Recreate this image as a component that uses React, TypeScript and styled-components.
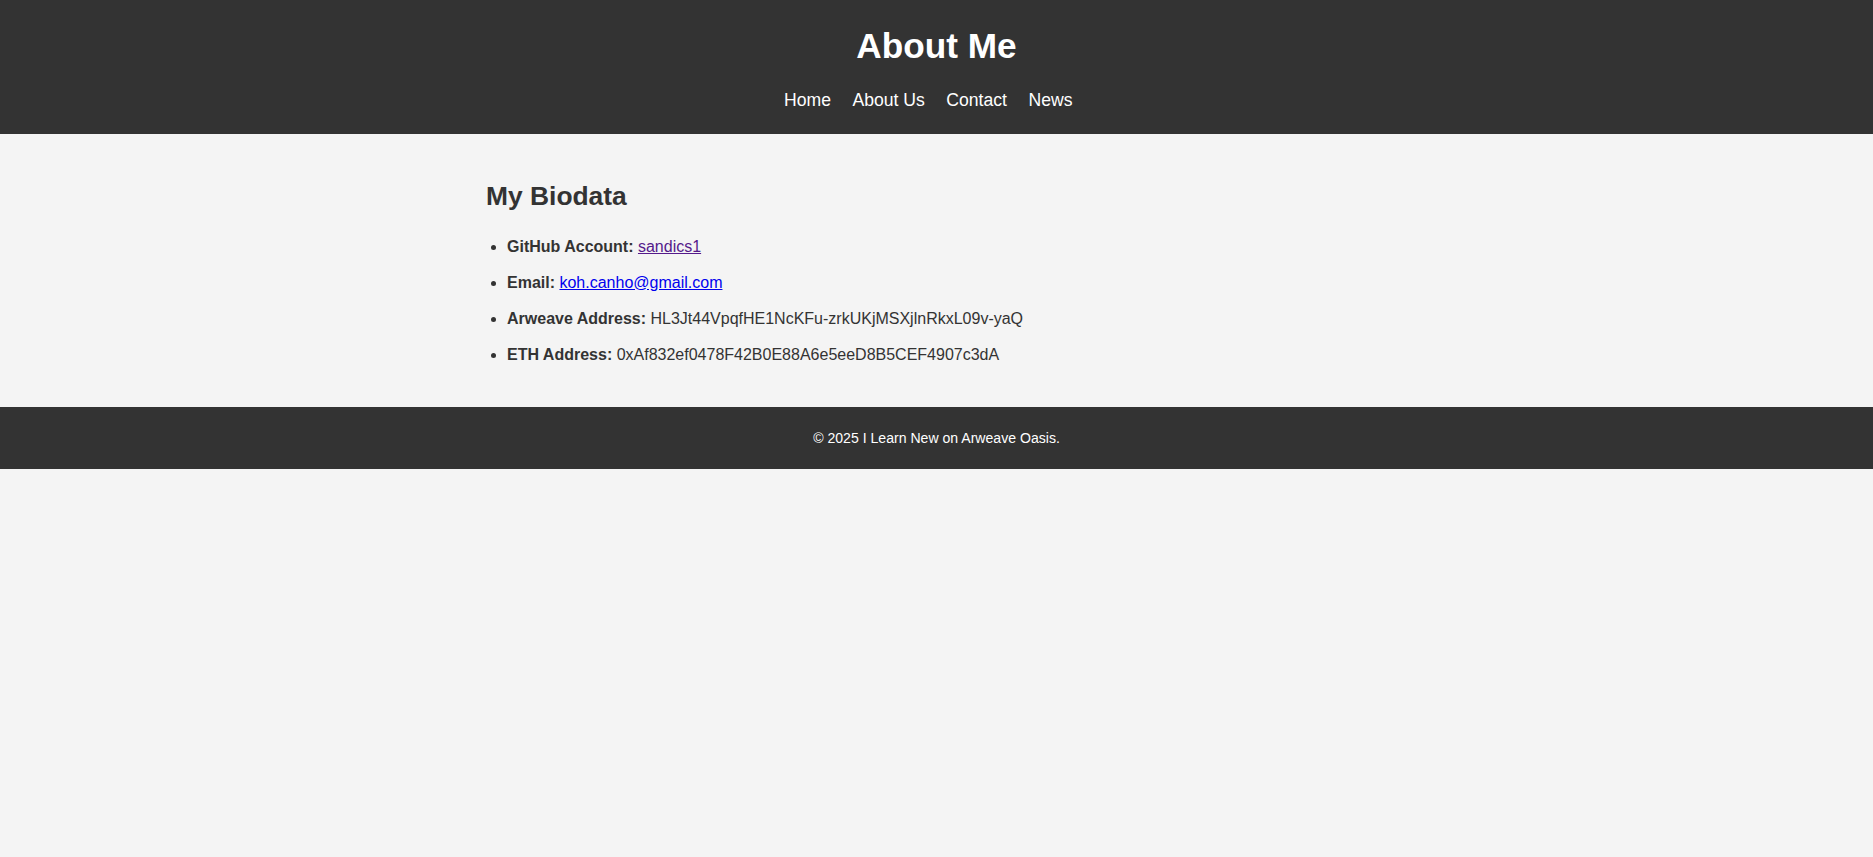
import React from "react";
import styled, { createGlobalStyle } from "styled-components";

const GlobalStyle = createGlobalStyle`
  html, body {
    margin: 0;
    padding: 0;
    background: #f4f4f4;
  }
  body {
    font-family: "Liberation Sans", Arial, sans-serif;
    color: #333;
    font-size: 17.6px;
  }
`;

const Header = styled.header`
  background: #333;
  color: #fff;
  padding: 26px 0 24px;
  text-align: center;
`;

const Title = styled.h1`
  margin: 0 0 24px;
  font-size: 35.2px;
  line-height: 40px;
  font-weight: bold;
`;

const Nav = styled.nav`
  display: flex;
  justify-content: center;
  gap: 5px;
`;

const NavLink = styled.a`
  color: #fff;
  text-decoration: none;
  font-size: 17.6px;
  line-height: 20px;
  margin-right: 16.5px;
`;

const Main = styled.main`
  width: 901px;
  margin: 0 auto;
  padding: 47px 0 42.5px;
`;

const Heading = styled.h2`
  margin: 0 0 25.5px;
  font-size: 26.4px;
  line-height: 30px;
  font-weight: bold;
`;

const List = styled.ul`
  margin: 0;
  padding-left: 21px;
`;

const Item = styled.li`
  font-size: 16px;
  line-height: 20px;
  margin-bottom: 16px;
  &:last-child {
    margin-bottom: 0;
  }
`;

const Label = styled.strong`
  font-weight: bold;
`;

const Link = styled.a<{ $visited?: boolean }>`
  color: ${(p) => (p.$visited ? "#551a8b" : "#0000ee")};
  text-decoration: underline;
`;

const Footer = styled.footer`
  background: #333;
  color: #fff;
  text-align: center;
  padding: 23px 0;
  font-size: 14.08px;
  line-height: 16px;
`;

export default function App() {
  return (
    <>
      <GlobalStyle />
      <Header>
        <Title>About Me</Title>
        <Nav>
          <NavLink href="#">Home</NavLink>
          <NavLink href="#">About Us</NavLink>
          <NavLink href="#">Contact</NavLink>
          <NavLink href="#">News</NavLink>
        </Nav>
      </Header>
      <Main>
        <Heading>My Biodata</Heading>
        <List>
          <Item>
            <Label>GitHub Account:</Label>{" "}
            <Link $visited href="#">sandics1</Link>
          </Item>
          <Item>
            <Label>Email:</Label> <Link href="#">koh.canho@gmail.com</Link>
          </Item>
          <Item>
            <Label>Arweave Address:</Label> HL3Jt44VpqfHE1NcKFu-zrkUKjMSXjlnRkxL09v-yaQ
          </Item>
          <Item>
            <Label>ETH Address:</Label> 0xAf832ef0478F42B0E88A6e5eeD8B5CEF4907c3dA
          </Item>
        </List>
      </Main>
      <Footer>© 2025 I Learn New on Arweave Oasis.</Footer>
    </>
  );
}
